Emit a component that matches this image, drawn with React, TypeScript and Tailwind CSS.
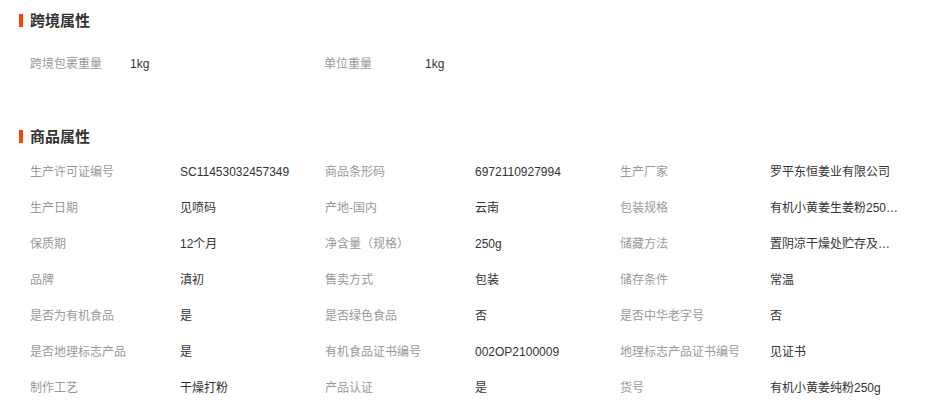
import React from "react";

const font = { fontFamily: '"Liberation Sans", Arial, "Noto Sans CJK SC", sans-serif' };

type Item = [string, string];

const rows: Item[][] = [
  [["生产许可证编号", "SC11453032457349"], ["商品条形码", "6972110927994"], ["生产厂家", "罗平东恒姜业有限公司"]],
  [["生产日期", "见喷码"], ["产地-国内", "云南"], ["包装规格", "有机小黄姜生姜粉250g/袋"]],
  [["保质期", "12个月"], ["净含量（规格）", "250g"], ["储藏方法", "置阴凉干燥处贮存及时密封"]],
  [["品牌", "滇初"], ["售卖方式", "包装"], ["储存条件", "常温"]],
  [["是否为有机食品", "是"], ["是否绿色食品", "否"], ["是否中华老字号", "否"]],
  [["是否地理标志产品", "是"], ["有机食品证书编号", "002OP2100009"], ["地理标志产品证书编号", "见证书"]],
  [["制作工艺", "干燥打粉"], ["产品认证", "是"], ["货号", "有机小黄姜纯粉250g"]],
];

function Header({ title }: { title: string }) {
  return (
    <div className="flex items-center h-[28px] pl-[19px]">
      <span className="w-[4px] h-[13px] bg-[#ff4400]" />
      <span className="ml-[7px] text-[15px] font-bold text-[#333333] leading-none">{title}</span>
    </div>
  );
}

export default function App() {
  return (
    <div className="w-[927px] h-[411px] bg-white overflow-hidden" style={font}>
      <div className="pt-[6px]">
        <Header title="跨境属性" />
      </div>
      <div className="mt-[12px] flex h-[36px] items-center pl-[30px] text-[12px]">
        <div className="flex w-[294px]">
          <span className="w-[100px] text-[#999999]">跨境包裹重量</span>
          <span className="text-[#333333]">1kg</span>
        </div>
        <div className="flex w-[294px]">
          <span className="w-[101px] text-[#999999]">单位重量</span>
          <span className="text-[#333333]">1kg</span>
        </div>
      </div>
      <div className="mt-[40px]">
        <Header title="商品属性" />
      </div>
      <div className="mt-[4px] pl-[30px] text-[12px]">
        {rows.map((r, i) => (
          <div key={i} className="flex h-[36px] items-center">
            {r.map(([k, v], j) => (
              <div key={j} className="flex w-[295px] items-center">
                <span className="w-[150px] shrink-0 text-[#999999] whitespace-nowrap">{k}</span>
                <span className="w-[130px] truncate text-[#333333]">{v}</span>
              </div>
            ))}
          </div>
        ))}
      </div>
    </div>
  );
}
